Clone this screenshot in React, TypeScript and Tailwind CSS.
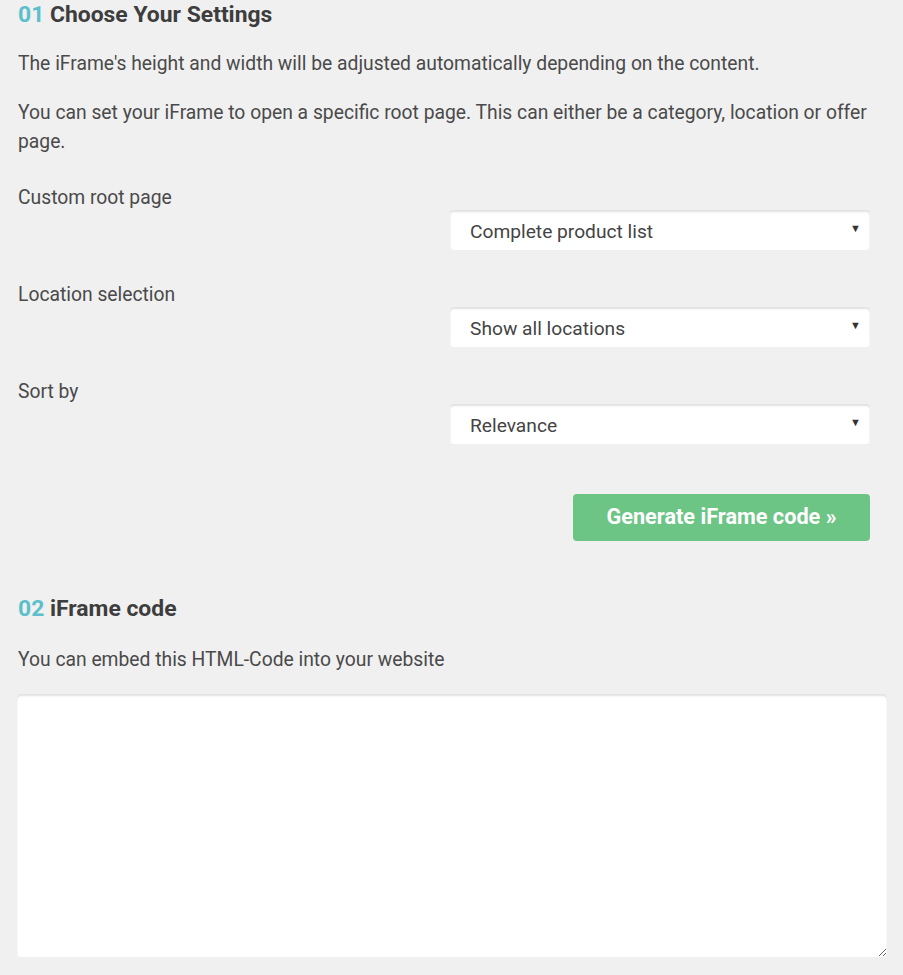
import { ChangeEvent, useState } from "react";

const ROWS = [
  { label: "Custom root page", value: "Complete product list" },
  { label: "Location selection", value: "Show all locations" },
  { label: "Sort by", value: "Relevance" },
];

function SelectRow({ label, value }: { label: string; value: string }) {
  return (
    <div className="flex items-start justify-between">
      <div className="pt-[2px] leading-[28px]">{label}</div>
      <div className="relative mt-[28px] mr-[15px] w-[420px]">
        <select
          defaultValue={value}
          className="h-[40px] w-full appearance-none rounded-[4px] bg-white pl-[20px] pt-[4px] text-[19.2px] text-[#444] shadow-[inset_0_2px_2px_rgba(0,0,0,0.12)] outline-none"
        >
          <option>{value}</option>
        </select>
        <span className="pointer-events-none absolute right-[9px] top-[11px] text-[11px] text-[#333]">▼</span>
      </div>
    </div>
  );
}

export default function App() {
  const [code, setCode] = useState("");

  return (
    <div className="min-h-[975px] bg-[#f0f0f0] px-[18px] pt-[1px] font-['Roboto',sans-serif] text-[19.3px] text-[#4a4a4a]">
      <h2 className="text-[22.9px] font-bold leading-[28px] text-[#3d3d3d]">
        <span className="text-[#5bbfcc]">01</span> Choose Your Settings
      </h2>
      <p className="mt-[21px] leading-[28px]">
        The iFrame's height and width will be adjusted automatically depending on the content.
      </p>
      <p className="mt-[20px] leading-[29px]">
        You can set your iFrame to open a specific root page. This can either be a category, location or offer page.
      </p>

      <div className="mt-[26px] flex flex-col gap-[29px]">
        {ROWS.map((r) => (
          <SelectRow key={r.label} label={r.label} value={r.value} />
        ))}
      </div>

      <div className="mt-[50px] flex justify-end pr-[15px]">
        <button className="h-[47px] w-[297px] rounded-[4px] bg-[#6cc485] text-[21.7px] font-bold text-white">
          Generate iFrame code »
        </button>
      </div>

      <h2 className="mt-[54px] text-[22.9px] font-bold leading-[28px] text-[#3d3d3d]">
        <span className="text-[#5bbfcc]">02</span> iFrame code
      </h2>
      <p className="mt-[23px] leading-[28px]">You can embed this HTML-Code into your website</p>

      <textarea
        value={code}
        onChange={(e: ChangeEvent<HTMLTextAreaElement>) => setCode(e.target.value)}
        className="mt-[20px] block h-[263px] w-[870px] -ml-[1px] rounded-[4px] bg-white shadow-[inset_0_2px_2px_rgba(0,0,0,0.12)] outline-none"
      />
    </div>
  );
}
